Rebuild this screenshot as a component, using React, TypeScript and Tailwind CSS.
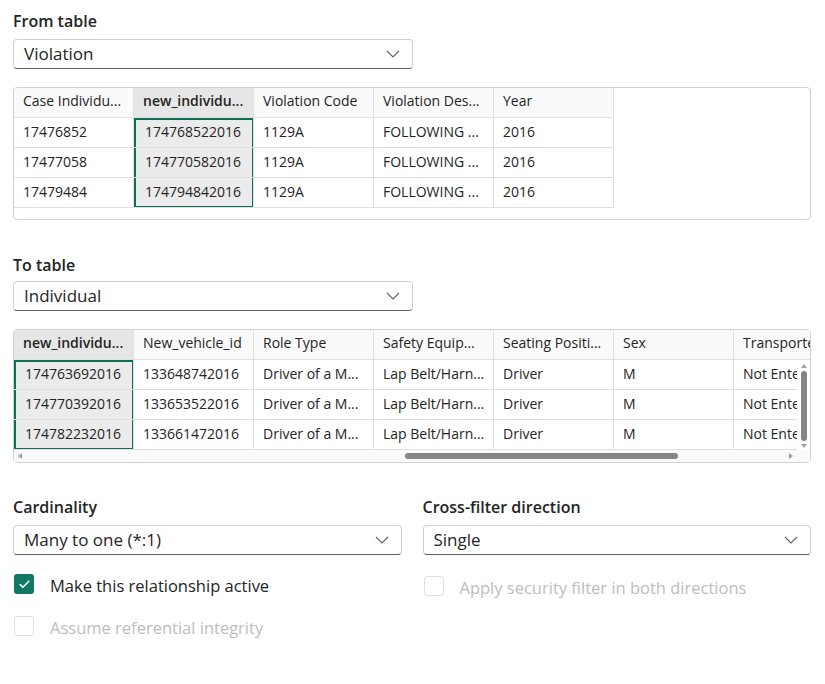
import { Check } from 'lucide-react';

// Column-based table so the selected column can carry its own green frame
interface ColumnDef {
  head: string;
  cells: string[];
  selected?: boolean;
}

const fromColumns: ColumnDef[] = [
  { head: 'Case Individu...', cells: ['17476852', '17477058', '17479484'] },
  { head: 'new_individu...', cells: ['174768522016', '174770582016', '174794842016'], selected: true },
  { head: 'Violation Code', cells: ['1129A', '1129A', '1129A'] },
  { head: 'Violation Des...', cells: ['FOLLOWING ...', 'FOLLOWING ...', 'FOLLOWING ...'] },
  { head: 'Year', cells: ['2016', '2016', '2016'] },
];

const toColumns: ColumnDef[] = [
  { head: 'new_individu...', cells: ['174763692016', '174770392016', '174782232016'], selected: true },
  { head: 'New_vehicle_id', cells: ['133648742016', '133653522016', '133661472016'] },
  { head: 'Role Type', cells: ['Driver of a M...', 'Driver of a M...', 'Driver of a M...'] },
  { head: 'Safety Equip...', cells: ['Lap Belt/Harn...', 'Lap Belt/Harn...', 'Lap Belt/Harn...'] },
  { head: 'Seating Positi...', cells: ['Driver', 'Driver', 'Driver'] },
  { head: 'Sex', cells: ['M', 'M', 'M'] },
  { head: 'Transported By', cells: ['Not Entered', 'Not Entered', 'Not Entered'] },
];

function Chevron() {
  return (
    <svg width="14" height="8" viewBox="0 0 14 8" fill="none">
      <path d="M1 1l6 6 6-6" stroke="#616161" strokeWidth="1.1" />
    </svg>
  );
}

function Dropdown({ value }: { value: string }) {
  return (
    <div className="h-[30px] flex items-center justify-between pl-[10px] pr-[12px] rounded-[4px] border border-[#d1d1d1] border-b-[#616161] bg-white text-[17px] text-[#242424]">
      <span>{value}</span>
      <Chevron />
    </div>
  );
}

function Label({ text }: { text: string }) {
  return <div className="h-[22px] leading-[22px] text-[16px] font-semibold text-[#242424]">{text}</div>;
}

function Column({ col }: { col: ColumnDef }) {
  const cell = 'h-[30px] px-[9px] whitespace-nowrap overflow-hidden border-r border-b border-[#e0e0e0]';
  return (
    <div className="w-[120px] shrink-0 flex flex-col">
      <div className={`${cell} leading-[26px] ${col.selected ? 'bg-[#e6e6e6] font-semibold' : 'bg-[#fafafa]'}`}>{col.head}</div>
      <div className={col.selected ? 'bg-[#ebebeb] shadow-[inset_0_0_0_2px_#0e6e5c]' : ''}>
        {col.cells.map((c, i) => (
          <div key={i} className={`${cell} leading-[28px] ${col.selected ? 'pl-[11px]' : ''}`}>{c}</div>
        ))}
      </div>
    </div>
  );
}

function Checkbox({ checked, disabled, label }: { checked?: boolean; disabled?: boolean; label: string }) {
  return (
    <div className="flex items-center h-[20px]">
      {checked ? (
        <div className="w-[20px] h-[20px] shrink-0 rounded-[3px] bg-[#117865] flex items-center justify-center">
          <Check size={13} strokeWidth={3} color="#fff" />
        </div>
      ) : (
        <div className="w-[20px] h-[20px] shrink-0 rounded-[3px] border border-[#e0e0e0] bg-white" />
      )}
      <span className={`ml-[16px] pt-[4px] whitespace-nowrap text-[16.5px] ${disabled ? 'text-[#bdbdbd]' : 'text-[#242424]'}`}>{label}</span>
    </div>
  );
}

export default function App() {
  return (
    <div className="w-[825px] h-[684px] bg-white pl-[13px] pr-[14px] pt-[10px] text-[#242424] font-['Open_Sans',sans-serif]">
      <Label text="From table" />
      <div className="mt-[7px] w-[400px]">
        <Dropdown value="Violation" />
      </div>

      {/* From table preview */}
      <div className="mt-[18px] h-[133px] rounded-[4px] border border-[#d1d1d1] overflow-hidden text-[14px]">
        <div className="flex">
          {fromColumns.map((c) => (
            <Column key={c.head} col={c} />
          ))}
        </div>
      </div>

      <div className="mt-[34px]">
        <Label text="To table" />
      </div>
      <div className="mt-[5px] w-[400px]">
        <Dropdown value="Individual" />
      </div>

      {/* To table preview with scrollbars */}
      <div className="mt-[18px] h-[134px] rounded-[4px] border border-[#d1d1d1] overflow-hidden text-[14px] flex flex-col">
        <div className="relative flex-1 overflow-hidden">
          <div className="flex">
            {toColumns.map((c) => (
              <Column key={c.head} col={c} />
            ))}
          </div>
          {/* vertical scrollbar over body rows */}
          <div className="absolute right-0 top-[30px] bottom-0 w-[13px] bg-white flex flex-col items-center">
            <div className="mt-[4px] w-0 h-0 border-l-[3px] border-r-[3px] border-b-[4px] border-l-transparent border-r-transparent border-b-[#a0a0a0]" />
            <div className="mt-[3px] w-[6px] flex-1 rounded-full bg-[#858585]" />
            <div className="mt-[3px] mb-[2px] w-0 h-0 border-l-[3px] border-r-[3px] border-t-[4px] border-l-transparent border-r-transparent border-t-[#a0a0a0]" />
          </div>
        </div>
        <div className="h-[12px] shrink-0 bg-[#fafafa] flex items-center px-[4px]">
          <div className="w-0 h-0 border-t-[3px] border-b-[3px] border-r-[4px] border-t-transparent border-b-transparent border-r-[#a0a0a0]" />
          <div className="ml-[383px] w-[273px] h-[6px] rounded-full bg-[#858585]" />
          <div className="ml-auto mr-[13px] w-0 h-0 border-t-[3px] border-b-[3px] border-l-[4px] border-t-transparent border-b-transparent border-l-[#a0a0a0]" />
        </div>
      </div>

      {/* Relationship options */}
      <div className="mt-[33px] grid grid-cols-2 gap-x-[21px]">
        <div>
          <Label text="Cardinality" />
          <div className="mt-[7px]">
            <Dropdown value="Many to one (*:1)" />
          </div>
          <div className="mt-[19px] pl-[1px]">
            <Checkbox checked label="Make this relationship active" />
          </div>
          <div className="mt-[22px] pl-[1px]">
            <Checkbox disabled label="Assume referential integrity" />
          </div>
        </div>
        <div>
          <Label text="Cross-filter direction" />
          <div className="mt-[7px]">
            <Dropdown value="Single" />
          </div>
          <div className="mt-[21px] pl-[1px]">
            <Checkbox disabled label="Apply security filter in both directions" />
          </div>
        </div>
      </div>
    </div>
  );
}
